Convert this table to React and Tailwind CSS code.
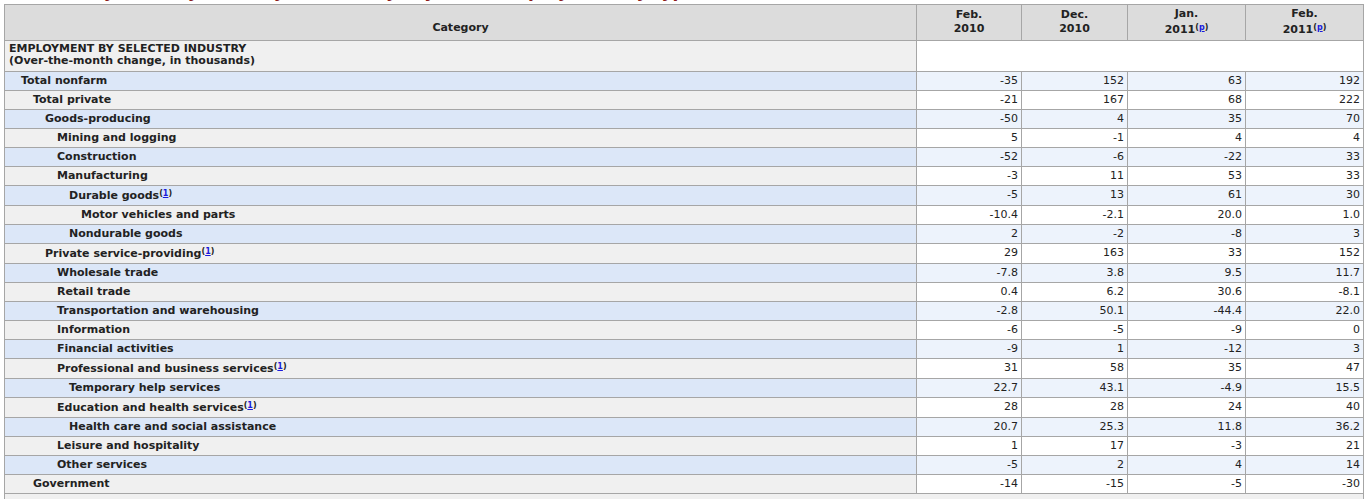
const rows = [
  ["Total nonfarm", 1, false, ["-35", "152", "63", "192"]],
  ["Total private", 2, false, ["-21", "167", "68", "222"]],
  ["Goods-producing", 3, false, ["-50", "4", "35", "70"]],
  ["Mining and logging", 4, false, ["5", "-1", "4", "4"]],
  ["Construction", 4, false, ["-52", "-6", "-22", "33"]],
  ["Manufacturing", 4, false, ["-3", "11", "53", "33"]],
  ["Durable goods", 5, true, ["-5", "13", "61", "30"]],
  ["Motor vehicles and parts", 6, false, ["-10.4", "-2.1", "20.0", "1.0"]],
  ["Nondurable goods", 5, false, ["2", "-2", "-8", "3"]],
  ["Private service-providing", 3, true, ["29", "163", "33", "152"]],
  ["Wholesale trade", 4, false, ["-7.8", "3.8", "9.5", "11.7"]],
  ["Retail trade", 4, false, ["0.4", "6.2", "30.6", "-8.1"]],
  ["Transportation and warehousing", 4, false, ["-2.8", "50.1", "-44.4", "22.0"]],
  ["Information", 4, false, ["-6", "-5", "-9", "0"]],
  ["Financial activities", 4, false, ["-9", "1", "-12", "3"]],
  ["Professional and business services", 4, true, ["31", "58", "35", "47"]],
  ["Temporary help services", 5, false, ["22.7", "43.1", "-4.9", "15.5"]],
  ["Education and health services", 4, true, ["28", "28", "24", "40"]],
  ["Health care and social assistance", 5, false, ["20.7", "25.3", "11.8", "36.2"]],
  ["Leisure and hospitality", 4, false, ["1", "17", "-3", "21"]],
  ["Other services", 4, false, ["-5", "2", "4", "14"]],
  ["Government", 2, false, ["-14", "-15", "-5", "-30"]],
];

const indent = {
  1: "pl-[16px]",
  2: "pl-[28px]",
  3: "pl-[40px]",
  4: "pl-[52px]",
  5: "pl-[64px]",
  6: "pl-[76px]",
};

const Note = ({ children }) => (
  <span className="text-[8px] align-[3px] font-bold">
    (<span className="text-[#1a1adb] underline">{children}</span>)
  </span>
);

export default function App() {
  return (
    <div className="bg-white w-[1368px] h-[499px] overflow-hidden text-[#222]" style={{ fontFamily: "'DejaVu Sans', Verdana, sans-serif" }}>
      {/* clipped page title above the table */}
      <div className="h-[4px] overflow-hidden">
        <div className="pl-[24px] -mt-[21px] text-[17px] leading-[24px] font-bold text-[#8b1a1a] whitespace-nowrap">
          Summary table by industry, seasonally adjusted, employment by type
        </div>
      </div>
      <table className="ml-[4px] w-[1359px] border-collapse table-fixed">
        <colgroup>
          <col className="w-[912px]" />
          <col className="w-[105px]" />
          <col className="w-[106px]" />
          <col className="w-[118px]" />
          <col className="w-[118px]" />
        </colgroup>
        <thead>
          <tr className="h-[36px] bg-[#dcdcdc] text-[11px] font-bold leading-[14px]">
            <th className="border border-[#a6a6a6] text-center align-bottom pb-[5px]">Category</th>
            <th className="border border-[#a6a6a6] text-center pb-[2px]">Feb.<br />2010</th>
            <th className="border border-[#a6a6a6] text-center pb-[2px]">Dec.<br />2010</th>
            <th className="border border-[#a6a6a6] text-center pb-[2px]">Jan.<br />2011<Note>p</Note></th>
            <th className="border border-[#a6a6a6] text-center pb-[2px]">Feb.<br />2011<Note>p</Note></th>
          </tr>
        </thead>
        <tbody className="text-[11px]">
          <tr className="h-[31px]">
            <td className="border border-[#a6a6a6] bg-[#f0f0f0] font-bold leading-[12px] pl-[4px] pt-[2px] align-top">
              EMPLOYMENT BY SELECTED INDUSTRY<br />(Over-the-month change, in thousands)
            </td>
            <td colSpan={4} className="border border-[#a6a6a6] bg-white"></td>
          </tr>
          {rows.map(([name, level, note, vals], i) => {
            const blue = i % 2 === 0;
            return (
              <tr key={name} className={`leading-[13px] ${note ? "h-[20px]" : "h-[19px]"}`}>
                <td className={`border border-[#a6a6a6] font-bold whitespace-nowrap pb-[2px] ${indent[level]} ${blue ? "bg-[#dce7f8]" : "bg-[#f0f0f0]"}`}>
                  {name}
                  {note && <Note>1</Note>}
                </td>
                {vals.map((v, j) => (
                  <td
                    key={j}
                    className={`border border-[#a6a6a6] text-right pr-[3px] pb-[2px] ${blue ? "bg-[#edf3fc]" : "bg-white"}`}
                  >
                    {v}
                  </td>
                ))}
              </tr>
            );
          })}
          <tr className="h-[19px]">
            <td colSpan={5} className="border border-[#a6a6a6] bg-[#f0f0f0]"></td>
          </tr>
        </tbody>
      </table>
    </div>
  );
}
